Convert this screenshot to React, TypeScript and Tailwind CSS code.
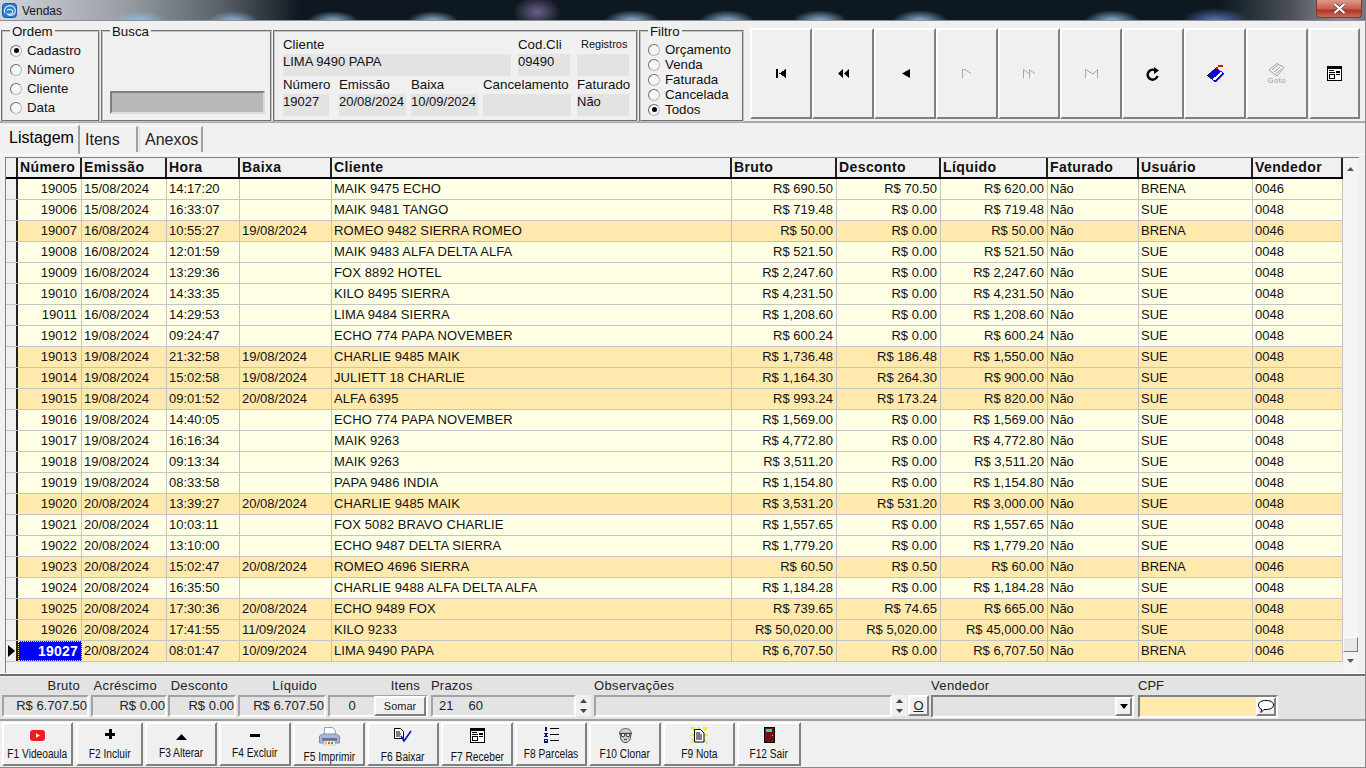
import React from "react";

type Row = [string, string, string, string, string, string, string, string, string, string];
const rows: Row[] = [
  ["19005","15/08/2024","14:17:20","","MAIK 9475 ECHO","690.50","70.50","620.00","BRENA","0046"],
  ["19006","15/08/2024","16:33:07","","MAIK 9481 TANGO","719.48","0.00","719.48","SUE","0048"],
  ["19007","16/08/2024","10:55:27","19/08/2024","ROMEO 9482 SIERRA ROMEO","50.00","0.00","50.00","BRENA","0046"],
  ["19008","16/08/2024","12:01:59","","MAIK 9483 ALFA DELTA ALFA","521.50","0.00","521.50","SUE","0048"],
  ["19009","16/08/2024","13:29:36","","FOX 8892 HOTEL","2,247.60","0.00","2,247.60","SUE","0048"],
  ["19010","16/08/2024","14:33:35","","KILO 8495 SIERRA","4,231.50","0.00","4,231.50","SUE","0048"],
  ["19011","16/08/2024","14:29:53","","LIMA 9484 SIERRA","1,208.60","0.00","1,208.60","SUE","0048"],
  ["19012","19/08/2024","09:24:47","","ECHO 774 PAPA NOVEMBER","600.24","0.00","600.24","SUE","0048"],
  ["19013","19/08/2024","21:32:58","19/08/2024","CHARLIE 9485 MAIK","1,736.48","186.48","1,550.00","SUE","0048"],
  ["19014","19/08/2024","15:02:58","19/08/2024","JULIETT 18 CHARLIE","1,164.30","264.30","900.00","SUE","0048"],
  ["19015","19/08/2024","09:01:52","20/08/2024","ALFA 6395","993.24","173.24","820.00","SUE","0048"],
  ["19016","19/08/2024","14:40:05","","ECHO 774 PAPA NOVEMBER","1,569.00","0.00","1,569.00","SUE","0048"],
  ["19017","19/08/2024","16:16:34","","MAIK 9263","4,772.80","0.00","4,772.80","SUE","0048"],
  ["19018","19/08/2024","09:13:34","","MAIK 9263","3,511.20","0.00","3,511.20","SUE","0048"],
  ["19019","19/08/2024","08:33:58","","PAPA 9486 INDIA","1,154.80","0.00","1,154.80","SUE","0048"],
  ["19020","20/08/2024","13:39:27","20/08/2024","CHARLIE 9485 MAIK","3,531.20","531.20","3,000.00","SUE","0048"],
  ["19021","20/08/2024","10:03:11","","FOX 5082 BRAVO CHARLIE","1,557.65","0.00","1,557.65","SUE","0048"],
  ["19022","20/08/2024","13:10:00","","ECHO 9487 DELTA SIERRA","1,779.20","0.00","1,779.20","SUE","0048"],
  ["19023","20/08/2024","15:02:47","20/08/2024","ROMEO 4696 SIERRA","60.50","0.50","60.00","BRENA","0046"],
  ["19024","20/08/2024","16:35:50","","CHARLIE 9488 ALFA DELTA ALFA","1,184.28","0.00","1,184.28","SUE","0048"],
  ["19025","20/08/2024","17:30:36","20/08/2024","ECHO 9489 FOX","739.65","74.65","665.00","SUE","0048"],
  ["19026","20/08/2024","17:41:55","11/09/2024","KILO 9233","50,020.00","5,020.00","45,000.00","SUE","0048"],
  ["19027","20/08/2024","08:01:47","10/09/2024","LIMA 9490 PAPA","6,707.50","0.00","6,707.50","BRENA","0046"],
];

const W = {
  num: "w-[64px]", emi: "w-[85px]", hora: "w-[73px]", baixa: "w-[92px]", cli: "w-[400px]",
  bruto: "w-[105px]", desc: "w-[104px]", liq: "w-[107px]", fat: "w-[91px]", usu: "w-[114px]", ven: "w-[90px]",
};

const raised = "border-2 border-t-white border-l-white border-r-[#808080] border-b-[#808080] bg-[#f0f0f0]";
const groove = "border-2 [border-style:groove] border-[#c4c4c4]";

function Radio({ on, label, h }: { on?: boolean; label: string; h: string }) {
  return (
    <div className={`flex items-center ${h}`}>
      <span className="w-[12px] h-[12px] rounded-full border border-t-[#6d6d6d] border-l-[#6d6d6d] border-r-[#b8b8b8] border-b-[#b8b8b8] bg-[#f6f6f6] flex items-center justify-center">
        {on && <span className="w-[5px] h-[5px] rounded-full bg-black" />}
      </span>
      <span className="ml-[5px] text-[13.3px] leading-none text-[#111]">{label}</span>
    </div>
  );
}

function Group({ title, cls, children }: { title: string; cls: string; children?: React.ReactNode }) {
  return (
    <fieldset className={`${groove} h-[99px] ${cls}`}>
      <legend className="ml-[7px] px-[2px] text-[13.3px] leading-[15px] text-[#111]">
        <span className="block translate-y-[1px]">{title}</span>
      </legend>
      {children}
    </fieldset>
  );
}

function Info({ label, value, w, small }: { label: string; value?: string; w: string; small?: boolean }) {
  return (
    <div className={`${w} flex flex-col shrink-0`}>
      <div className={`h-[18px] flex items-center whitespace-nowrap ${small ? "text-[11px] pl-[4px] pb-[2px]" : "text-[13.3px]"} text-[#111]`}>{label}</div>
      <div className="h-[22px] bg-[#e3e3e3] text-[13px] leading-[15px] whitespace-nowrap text-[#111]">{value}</div>
    </div>
  );
}

const P = "[shape-rendering:crispEdges]";

function NavIcon({ kind }: { kind: number }) {
  const k = "#000";
  const g = "#a8a8a8";
  if (kind === 0) return <svg width="12" height="9" className={P}><rect x="1" y="0" width="2" height="9" fill={k} /><path d="M11 0v9L4 4.5z" fill={k} /></svg>;
  if (kind === 1) return <svg width="12" height="9"><path d="M6 0v9L1 4.5zM12 0v9L7 4.5z" fill={k} /></svg>;
  if (kind === 2) return <svg width="9" height="9"><path d="M9 0v9L1 4.5z" fill={k} /></svg>;
  if (kind === 3) return <svg width="10" height="10"><path d="M.5 9.500L9 5" fill="none" stroke="#fff" /><path d="M.5 9.500V.5H3L9 4.500" fill="none" stroke={g} /></svg>;
  if (kind === 4) return <svg width="13" height="10"><path d="M.5 9.500L6 5.500M6.500 9.500L12 5.500" fill="none" stroke="#fff" /><path d="M.5 9.500V.5L6 5M6.500 9.500V.5L12 5" fill="none" stroke={g} /></svg>;
  if (kind === 5) return <svg width="13" height="10"><path d="M.5 9.500L8 6.500L12.500 9.500" fill="none" stroke="#fff" /><path d="M.5 9.500V.5L8 5 12.500.5V9.500" fill="none" stroke={g} /></svg>;
  if (kind === 6) return <svg width="14" height="14" viewBox="0 0 14 14"><path d="M11.500 9A5 5 0 1 1 8.500 3" fill="none" stroke="#000" strokeWidth="2.400" /><path d="M8 0l5 3.500L8 7z" fill="#000" /></svg>;
  if (kind === 7) return (
    <svg width="17" height="17" viewBox="0 0 17 17" className={P}>
      <path d="M0 10.500L9 3l7 5.500-8 8z" fill="#0a0ad8" stroke="#000" strokeWidth=".6" />
      <path d="M5 14L14 6l2 2.500-8 8z" fill="#fff" stroke="#0a0ad8" />
      <rect x="11" y="0" width="5" height="2" fill="#e01010" />
      <rect x="9" y="2" width="2" height="2" fill="#e01010" />
    </svg>
  );
  if (kind === 8) return (
    <div className="flex flex-col items-center">
      <svg width="17" height="14" viewBox="0 0 17 14"><path d="M1 7L9 .5 16 4.500 9 13z" fill="#f4f4f4" stroke="#a0a0a0" /><path d="M4 7l6-5M6 9l6-5M8 11l5-5" stroke="#a0a0a0" fill="none" /></svg>
      <span className="text-[7.500px] leading-[8px] tracking-[.5px] text-[#9a9a9a]">Goto</span>
    </div>
  );
  return <FormIcon />;
}

function FormIcon() {
  return (
    <svg width="15" height="15" viewBox="0 0 15 15" className={P}>
      <rect width="15" height="15" fill="#000" />
      <rect x="1" y="3" width="13" height="11" fill="#fff" />
      <rect x="2" y="4" width="5" height="1" fill="#000" /><rect x="9" y="5" width="4" height="2" fill="#000" />
      <rect x="2" y="6" width="6" height="1" fill="#000" /><rect x="9" y="8" width="4" height="1" fill="#000" />
      <rect x="2" y="8" width="6" height="5" fill="#000" /><rect x="3" y="9" width="4" height="3" fill="#fff" />
    </svg>
  );
}

function FooterIcon({ name }: { name: string }) {
  switch (name) {
    case "yt": return <svg width="15" height="11" viewBox="0 0 15 11"><rect width="15" height="11" rx="3" fill="#ee1c1c" /><path d="M6 3.200v4.600L10 5.500z" fill="#fff" /></svg>;
    case "plus": return <svg width="10" height="10" className={P}><path d="M3.500 0h3v3.500H10v3H6.500V10h-3V6.500H0v-3h3.500z" fill="#000" /></svg>;
    case "up": return <svg width="11" height="6"><path d="M5.500 0L11 6H0z" fill="#000" /></svg>;
    case "minus": return <svg width="10" height="3" className={P}><rect width="10" height="3" fill="#000" /></svg>;
    case "print": return (
      <svg width="21" height="19" viewBox="0 0 21 19">
        <path d="M5.500.5h8l3 3v5h-11z" fill="#fff" stroke="#8fa0c0" />
        <path d="M.5 9l3-2h14l3 2v7h-20z" fill="#a9b6d8" stroke="#7d8cad" />
        <rect x="3" y="11" width="15" height="3" fill="#6a7690" />
        <rect x="5" y="14" width="11" height="4" fill="#fff" stroke="#999" strokeWidth=".5" />
        <path d="M6 15h2v2H6z" fill="#f5c400" /><path d="M9 15h2v2H9z" fill="#e06020" /><path d="M12 15h2v2h-2z" fill="#40a040" />
      </svg>
    );
    case "check": return (
      <svg width="18" height="15" viewBox="0 0 18 15">
        <path d="M.5.500h6l3 3v7h-9z" fill="#fff" stroke="#000" />
        <path d="M2 4h4M2 6h5M2 8h4" stroke="#000" />
        <path d="M7 8l3 5 7-10" fill="none" stroke="#0b0bc8" strokeWidth="1.500" />
      </svg>
    );
    case "form": return <FormIcon />;
    case "list": return (
      <svg width="15" height="16" viewBox="0 0 15 16" className={P}>
        <rect x="1" y="0" width="2" height="4" fill="#10108c" /><rect x="0" y="6" width="4" height="1" fill="#10108c" /><rect x="1" y="7" width="2" height="2" fill="#10108c" />
        <rect x="0" y="9" width="4" height="1" fill="#10108c" /><rect x="0" y="12" width="4" height="4" fill="#10108c" /><rect x="1" y="13" width="2" height="1" fill="#fff" />
        <rect x="6" y="1" width="9" height="1" fill="#000" /><rect x="6" y="7" width="9" height="1" fill="#000" /><rect x="6" y="13" width="9" height="1" fill="#000" />
      </svg>
    );
    case "clone": return (
      <svg width="15" height="15" viewBox="0 0 15 15">
        <path d="M2 6C1 2 5 .5 7.500.5S14 2 13 6l-1 6-3 2.500H6L3 12z" fill="#cfcfcf" stroke="#555" />
        <path d="M1 5.500h13" stroke="#444" strokeWidth="1.200" />
        <circle cx="5" cy="7" r="1.800" fill="#eee" stroke="#333" /><circle cx="10" cy="7" r="1.800" fill="#eee" stroke="#333" />
        <path d="M6 11.500h3" stroke="#444" />
      </svg>
    );
    case "nota": return (
      <svg width="17" height="17" viewBox="0 0 17 17">
        <path d="M0 0l4 4M17 0l-4 4M0 16l4-3M17 17l-4-4M3 0v2M8 0v2M13 0v2M0 8h3M14 8h3M0 12h3" stroke="#f2e600" strokeWidth="1.400" />
        <path d="M3.500 2.500h6l3.500 3.500v9h-9.500z" fill="#fff" stroke="#000" />
        <path d="M5 6h4M5 8h6M5 10h6M5 12h6" stroke="#000" />
      </svg>
    );
    case "door": return (
      <svg width="11" height="16" viewBox="0 0 11 16" className={P}>
        <rect width="11" height="16" fill="#000" /><rect x="1" y="1" width="9" height="14" fill="#7a0a10" />
        <rect x="2" y="2" width="6" height="3" fill="#18d8e8" /><rect x="8" y="8" width="1" height="1" fill="#e8c040" />
      </svg>
    );
    default: return null;
  }
}

const footerBtns = [
  { label: "F1 Videoaula", icon: "yt", w: "w-[71px]", mr: "mr-[3px]", ic: "pb-[2px]", lb: "" },
  { label: "F2 Incluir", icon: "plus", w: "w-[67px]", mr: "mr-[2px]", ic: "pb-[4px]", lb: "" },
  { label: "F3 Alterar", icon: "up", w: "w-[72px]", mr: "mr-[2px]", ic: "pt-[2px]", lb: "-mt-[1px]" },
  { label: "F4 Excluir", icon: "minus", w: "w-[72px]", mr: "mr-[2px]", ic: "pb-[2px]", lb: "-mt-[1px]" },
  { label: "F5 Imprimir", icon: "print", w: "w-[72px]", mr: "mr-[2px]", ic: "", lb: "mt-[3px]" },
  { label: "F6 Baixar", icon: "check", w: "w-[72px]", mr: "mr-[2px]", ic: "pb-[2px]", lb: "mt-[3px]" },
  { label: "F7 Receber", icon: "form", w: "w-[72px]", mr: "mr-[2px]", ic: "pb-[2px]", lb: "mt-[3px]" },
  { label: "F8 Parcelas", icon: "list", w: "w-[72px]", mr: "mr-[2px]", ic: "pb-[2px]", lb: "" },
  { label: "F10 Clonar", icon: "clone", w: "w-[72px]", mr: "mr-[2px]", ic: "pb-[1px]", lb: "" },
  { label: "F9 Nota", icon: "nota", w: "w-[72px]", mr: "mr-[2px]", ic: "pb-[2px]", lb: "" },
  { label: "F12 Sair", icon: "door", w: "w-[64px]", mr: "", ic: "pb-[2px]", lb: "" },
];

const inset = "border-2 border-t-[#a3a3a3] border-l-[#a3a3a3] border-r-white border-b-white bg-[#e3e3e3]";

function Spin() {
  return (
    <div className="w-[15px] h-[21px] flex flex-col items-center justify-center gap-[6px] bg-[#f0f0f0]">
      <svg width="7" height="4"><path d="M3.500 0L7 4H0z" fill="#444" /></svg>
      <svg width="7" height="4"><path d="M0 0h7L3.500 4z" fill="#444" /></svg>
    </div>
  );
}

function Sum({ label, value, w, mr, pr }: { label: string; value: string; w: string; mr: string; pr: string }) {
  return (
    <div className={`${w} ${mr} flex flex-col shrink-0`}>
      <div className={`h-[18px] flex items-center justify-end ${pr} text-[13px] tracking-[.3px] text-[#222] whitespace-nowrap`}>{label}</div>
      <div className={`h-[22px] ${inset} flex items-center justify-end text-[13px] text-[#222] whitespace-nowrap`}>{value}</div>
    </div>
  );
}

export default function App() {
  return (
    <div className="w-[1366px] h-[768px] flex flex-col overflow-hidden bg-[#f0f0f0] font-['Liberation_Sans',Arial,sans-serif] text-black">
      {/* title bar */}
      <div className="h-[21px] shrink-0 flex justify-between items-start border-b border-[#8b9096] bg-[radial-gradient(ellipse_26px_11px_at_140px_22px,#8fc0ea,transparent),radial-gradient(ellipse_26px_11px_at_233px_22px,#8fc0ea,transparent),radial-gradient(ellipse_26px_11px_at_333px_22px,#9ccaf0,transparent),radial-gradient(ellipse_26px_11px_at_433px_22px,#9ccaf0,transparent),radial-gradient(ellipse_24px_16px_at_537px_12px,#6a6088,transparent),radial-gradient(ellipse_28px_12px_at_632px_22px,#9ccaf0,transparent),radial-gradient(ellipse_28px_12px_at_727px_22px,#9ccaf0,transparent),radial-gradient(ellipse_28px_12px_at_820px_22px,#9ccaf0,transparent),radial-gradient(ellipse_28px_12px_at_920px_22px,#9ccaf0,transparent),radial-gradient(ellipse_28px_12px_at_1112px_22px,#9ccaf0,transparent),radial-gradient(ellipse_34px_14px_at_1215px_22px,#5f80d0,transparent),linear-gradient(90deg,#cfd5da_0px,#9aa0a6_120px,#5b6168_220px,#0f1820_300px,#0d1820_1220px,#4a5056_1290px,#8b9096_1340px,#70767c_1366px)]">
        <div className="flex items-center pl-[2px] pt-[3px]">
          <svg width="15" height="15" viewBox="0 0 15 15">
            <rect x=".5" y=".5" width="14" height="14" rx="3" fill="#2f7fc8" stroke="#1a5a9a" />
            <path d="M3 10a5.500 5 0 1 1 8.500 1.500c-2 1.500-5 1-6-.5 2 .5 6 0 5-3-1-2-4-2-5.500-.5" fill="none" stroke="#d8ecfa" strokeWidth="1.200" />
          </svg>
          <span className="ml-[5px] text-[12px] leading-[15px] translate-y-[1px] text-[#10181f]">Vendas</span>
        </div>
        <div className="mr-[4px] w-[46px] h-[18px] rounded-b-[4px] border border-t-0 border-[#7a3c34] bg-[linear-gradient(180deg,#dd9a8e,#c8604e_50%,#b03222_60%,#c86a58)] flex items-center justify-center">
          <svg width="13" height="11" viewBox="0 0 13 11"><path d="M1.500 1l10 9M11.500 1l-10 9" stroke="#444" strokeWidth="3.500" /><path d="M1.500 1l10 9M11.500 1l-10 9" stroke="#fff" strokeWidth="2.200" /></svg>
        </div>
      </div>

      <div className="flex-1 flex flex-col border-r border-b border-[#8a8a8a] min-h-0">
        {/* toolbar */}
        <div className="h-[102px] shrink-0 flex items-start pt-[2px] pl-[1px] border-b-2 border-[#a8a8a8]">
          <Group title="Ordem" cls="w-[99px]">
            <div className="pt-[3px] pl-[7px]">
              <Radio on label="Cadastro" h="h-[19px]" />
              <Radio label="Número" h="h-[19px]" />
              <Radio label="Cliente" h="h-[19px]" />
              <Radio label="Data" h="h-[19px]" />
            </div>
          </Group>
          <Group title="Busca" cls="w-[171px] ml-[1px]">
            <div className="ml-[7px] mt-[53px] w-[155px] h-[23px] border-2 border-t-[#808080] border-l-[#808080] border-r-[#dcdcdc] border-b-[#dcdcdc] bg-[#b9b9b9]" />
          </Group>
          <div className={`${groove} w-[365px] h-[92px] ml-[1px] mt-[7px] pl-[8px] pt-[4px]`}>
            <div className="flex gap-x-[7px]">
              <Info label="Cliente" value="LIMA 9490 PAPA" w="w-[228px]" />
              <Info label="Cod.Cli" value="09490" w="w-[52px]" />
              <Info label="Registros" w="w-[52px]" small />
            </div>
            <div className="flex">
              <Info label="Número" value="19027" w="w-[46px] mr-[10px]" />
              <Info label="Emissão" value="20/08/2024" w="w-[67px] mr-[5px]" />
              <Info label="Baixa" value="10/09/2024" w="w-[67px] mr-[5px]" />
              <Info label="Cancelamento" w="w-[88px] mr-[6px]" />
              <Info label="Faturado" value="Não" w="w-[52px]" />
            </div>
          </div>
          <Group title="Filtro" cls="w-[105px] ml-[1px]">
            <div className="pl-[7px] pt-[4px]">
              <Radio label="Orçamento" h="h-[15px]" />
              <Radio label="Venda" h="h-[15px]" />
              <Radio label="Faturada" h="h-[15px]" />
              <Radio label="Cancelada" h="h-[15px]" />
              <Radio on label="Todos" h="h-[15px]" />
            </div>
          </Group>
          <div className="flex ml-[6px] mt-[5px]">
            {[0, 1, 2, 3, 4, 5, 6, 7, 8].map((k) => (
              <div key={k} className={`w-[62px] h-[91px] ${raised} flex items-center justify-center`}>
                <NavIcon kind={k} />
              </div>
            ))}
            <div className={`w-[51px] h-[91px] ml-[1px] ${raised} flex items-center justify-center`}>
              <NavIcon kind={9} />
            </div>
          </div>
        </div>

        {/* tabs */}
        <div className="h-[31px] shrink-0 flex items-end pl-[3px] pb-[2px]">
          <div className="w-[77px] h-[29px] border-r-2 border-[#a0a0a0] text-[16px] leading-[24px] pl-[6px] -mb-[2px] bg-[#f0f0f0] border-t border-t-white">Listagem</div>
          <div className="w-[58px] h-[26px] border-r-2 border-[#a0a0a0] border-t border-t-white text-[16px] leading-[25px] pl-[5px] text-[#222]">Itens</div>
          <div className="w-[64px] h-[26px] ml-[1px] border-r-2 border-l border-l-[#dcdcdc] border-[#a0a0a0] border-t border-t-white text-[16px] leading-[25px] pl-[5px] text-[#222]">Anexos</div>
        </div>
        <div className="h-[1px] shrink-0 bg-white" />

        {/* grid */}
        <div className="h-[516px] shrink-0 ml-[5px] mr-[6px] mt-[2px] flex border-t border-l border-[#808080]">
          <div className="w-[1337px] flex flex-col">
            <div className="h-[21px] shrink-0 flex border-b-2 border-black bg-[#f0f0f0]">
              <div className="w-[12px] border-r-2 border-[#222]" />
              {[
                ["Número", W.num], ["Emissão", W.emi], ["Hora", W.hora], ["Baixa", W.baixa], ["Cliente", W.cli],
                ["Bruto", W.bruto], ["Desconto", W.desc], ["Líquido", W.liq], ["Faturado", W.fat], ["Usuário", W.usu], ["Vendedor", W.ven],
              ].map(([t, w]) => (
                <div key={t} className={`${w} shrink-0 border-r-2 border-[#222] pl-[2px] text-[14px] leading-[19px] font-bold tracking-[.4px] text-[#111]`}>{t}</div>
              ))}
            </div>
            {rows.map((r, i) => {
              const orange = r[3] !== "";
              const sel = i === rows.length - 1;
              const bg = orange ? "bg-[#ffe9ad]" : "bg-[#ffffe6]";
              const c = "shrink-0 border-r border-[#c4c4c4] whitespace-nowrap";
              const num = `${c} text-right pr-[3px]`;
              const txt = `${c} pl-[2px]`;
              return (
                <div key={r[0]} className={`h-[21px] shrink-0 flex text-[13px] leading-[20px] text-[#111] border-b border-[#c4c4c4] ${bg}`}>
                  <div className="w-[12px] shrink-0 bg-[#f0f0f0] border-r-2 border-[#222] flex items-center justify-center">
                    {sel && <svg width="7" height="12"><path d="M0 0l7 6-7 6z" fill="#000" /></svg>}
                  </div>
                  {sel ? (
                    <div className={`${W.num} shrink-0 bg-[#0000ff] text-white font-bold text-[14px] tracking-[.2px] text-right pr-[3px] border border-dotted border-[#ffe066] leading-[18px]`}>{r[0]}</div>
                  ) : (
                    <div className={`${W.num} ${c} text-right pr-[4px]`}>{r[0]}</div>
                  )}
                  <div className={`${W.emi} ${txt}`}>{r[1]}</div>
                  <div className={`${W.hora} ${txt}`}>{r[2]}</div>
                  <div className={`${W.baixa} ${txt}`}>{r[3]}</div>
                  <div className={`${W.cli} ${txt} tracking-[.1px]`}>{r[4]}</div>
                  <div className={`${W.bruto} ${num}`}>R$ {r[5]}</div>
                  <div className={`${W.desc} ${num}`}>R$ {r[6]}</div>
                  <div className={`${W.liq} ${num}`}>R$ {r[7]}</div>
                  <div className={`${W.fat} ${txt}`}>Não</div>
                  <div className={`${W.usu} ${txt}`}>{r[8]}</div>
                  <div className={`${W.ven} ${txt}`}>{r[9]}</div>
                </div>
              );
            })}
            <div className="flex-1 bg-[#f0f0f0]" />
          </div>
          <div className="w-[15px] flex flex-col items-center bg-[#f4f4f4]">
            <div className="h-[21px] flex items-center justify-center"><svg width="7" height="4"><path d="M3.500 0L7 4H0z" fill="#555" /></svg></div>
            <div className="flex-1" />
            <div className="w-[15px] h-[15px] border border-t-white border-l-white border-r-[#7a7a7a] border-b-[#7a7a7a] bg-[#e8e8e8] mb-[1px]" />
            <div className="h-[16px] mb-[4px] flex items-center justify-center"><svg width="7" height="4"><path d="M0 0h7L3.500 4z" fill="#555" /></svg></div>
          </div>
        </div>
        <div className="h-[1px] shrink-0 bg-white" />
        <div className="h-[2px] shrink-0 bg-[#6e6e6e]" />

        {/* footer fields */}
        <div className="h-[44px] shrink-0 mt-[1px] flex pl-[2px] bg-[#e3e3e3] border-b-2 border-[#a0a0a0] text-[13px] text-[#222]">
          <Sum label="Bruto" value="R$ 6.707.50" w="w-[87px]" mr="mr-[2px]" pr="pr-[9px]" />
          <Sum label="Acréscimo" value="R$ 0.00" w="w-[76px]" mr="mr-[1px]" pr="pr-[10px]" />
          <Sum label="Desconto" value="R$ 0.00" w="w-[68px]" mr="mr-[2px]" pr="pr-[8px]" />
          <Sum label="Líquido" value="R$ 6.707.50" w="w-[88px]" mr="mr-[2px]" pr="pr-[9px]" />
          <div className="w-[100px] mr-[3px] flex flex-col shrink-0">
            <div className="h-[18px] flex items-center justify-end pr-[8px] tracking-[.2px]">Itens</div>
            <div className={`h-[22px] ${inset} flex items-center`}>
              <span className="w-[44px] text-center">0</span>
              <div className={`w-[52px] h-[20px] ${raised} flex items-center justify-center text-[11px]`}>Somar</div>
            </div>
          </div>
          <div className="w-[161px] mr-[2px] flex flex-col shrink-0">
            <div className="h-[18px] flex items-center tracking-[.2px]">Prazos</div>
            <div className="flex">
              <div className={`w-[145px] h-[22px] ${inset} flex items-center pl-[6px] gap-x-[15px]`}><span>21</span><span>60</span></div>
              <Spin />
            </div>
          </div>
          <div className="w-[335px] mr-[2px] flex flex-col shrink-0">
            <div className="h-[18px] flex items-center tracking-[.35px]">Observações</div>
            <div className="flex">
              <div className={`w-[298px] h-[22px] ${inset}`} />
              <Spin />
              <div className={`ml-[1px] w-[21px] h-[21px] ${raised} flex items-center justify-center underline text-[13px]`}>O</div>
            </div>
          </div>
          <div className="w-[203px] mr-[4px] flex flex-col shrink-0">
            <div className="h-[18px] flex items-center tracking-[.35px]">Vendedor</div>
            <div className={`h-[23px] border-2 border-t-[#808080] border-l-[#808080] border-r-white border-b-white bg-[#e3e3e3] flex justify-end`}>
              <div className={`w-[17px] h-[19px] ${raised} flex items-center justify-center`}><svg width="8" height="5"><path d="M0 0h8L4 5z" fill="#000" /></svg></div>
            </div>
          </div>
          <div className="w-[140px] flex flex-col shrink-0">
            <div className="h-[18px] flex items-center">CPF</div>
            <div className="h-[23px] border-2 border-t-[#808080] border-l-[#808080] border-r-white border-b-white bg-[#ffe9ad] flex justify-end">
              <div className={`w-[20px] h-[19px] ${raised} flex items-center justify-center`}>
                <svg width="16" height="13" viewBox="0 0 16 13"><path d="M8 .5c4 0 7.500 1.500 7.500 4.500S12 9.500 8 9.500H6L3 12.500l.5-3.500C1.500 8.500.5 7 .5 5 .5 2 4 .5 8 .5z" fill="#fff" stroke="#000" /></svg>
              </div>
            </div>
          </div>
        </div>

        {/* footer buttons */}
        <div className="flex-1 flex pl-[2px] pt-[1px]">
          {footerBtns.map((b) => (
            <div key={b.label} className={`${b.w} ${b.mr} h-[44px] shrink-0 ${raised} flex flex-col items-center`}>
              <div className={`h-[24px] flex items-center justify-center ${b.ic}`}><FooterIcon name={b.icon} /></div>
              <div className={`text-[12px] leading-[12px] whitespace-nowrap text-[#111] scale-x-[.85] ${b.lb}`}>{b.label}</div>
            </div>
          ))}
        </div>
      </div>
    </div>
  );
}
